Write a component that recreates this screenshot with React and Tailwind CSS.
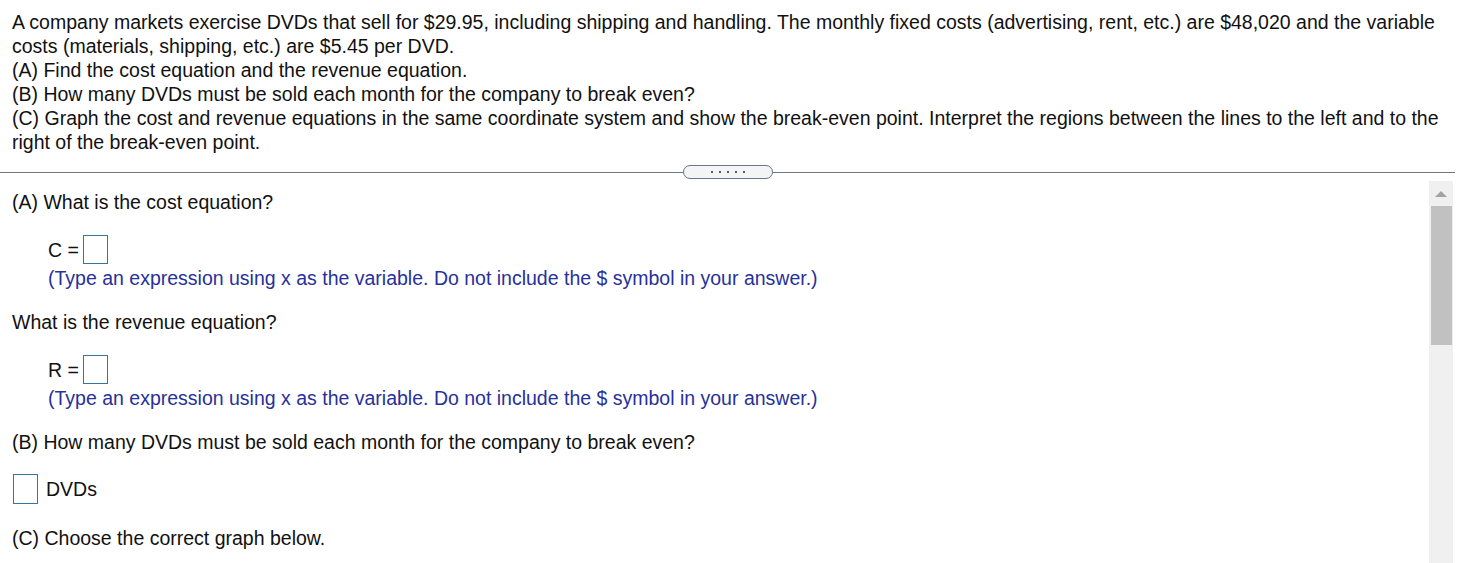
import React from 'react';

function AnswerBox() {
  return <span className="inline-block w-[25px] h-[29px] border border-[#2f78a6] bg-white" />;
}

export default function App() {
  return (
    <div className="w-[1458px] h-[563px] overflow-hidden bg-white text-[19.5px] leading-6 text-[#111] font-['Liberation_Sans',Arial,sans-serif]">
      {/* Question text */}
      <div className="pl-3 pr-4 pt-[10px]">
        <p>
          A company markets exercise DVDs that sell for $29.95, including shipping and handling. The monthly fixed costs (advertising, rent, etc.) are $48,020 and the variable costs (materials, shipping, etc.) are $5.45 per DVD.
        </p>
        <p>(A) Find the cost equation and the revenue equation.</p>
        <p>(B) How many DVDs must be sold each month for the company to break even?</p>
        <p>
          (C) Graph the cost and revenue equations in the same coordinate system and show the break-even point. Interpret the regions between the lines to the left and to the right of the break-even point.
        </p>
      </div>

      {/* Divider */}
      <div className="mt-[11px] flex items-center pr-[3px]">
        <div className="flex-1 h-px bg-[#6b7785]" />
        <div className="w-[90px] h-[14px] rounded-full border border-[#6b7785] bg-[#f3f4f6] flex items-center justify-center gap-[6px]">
          <span className="w-[2px] h-[2px] bg-[#555b63]" />
          <span className="w-[2px] h-[2px] bg-[#555b63]" />
          <span className="w-[2px] h-[2px] bg-[#555b63]" />
          <span className="w-[2px] h-[2px] bg-[#555b63]" />
          <span className="w-[2px] h-[2px] bg-[#555b63]" />
        </div>
        <div className="flex-1 h-px bg-[#6b7785]" />
      </div>

      {/* Answer area */}
      <div className="mt-[2px] flex h-[400px]">
        <div className="flex-1 pl-3 pt-[9px]">
          <p>(A) What is the cost equation?</p>
          <div className="ml-9 mt-[21px] flex items-center gap-[4px]">
            <span>C =</span>
            <AnswerBox />
          </div>
          <p className="ml-9 mt-[2px] text-[#27319a]">
            (Type an expression using x as the variable. Do not include the $ symbol in your answer.)
          </p>
          <p className="mt-5">What is the revenue equation?</p>
          <div className="ml-9 mt-[21px] flex items-center gap-[4px]">
            <span>R =</span>
            <AnswerBox />
          </div>
          <p className="ml-9 mt-[2px] text-[#27319a]">
            (Type an expression using x as the variable. Do not include the $ symbol in your answer.)
          </p>
          <p className="mt-5">(B) How many DVDs must be sold each month for the company to break even?</p>
          <div className="mt-5 flex items-center gap-[8px] ml-[1px]">
            <span className="inline-block w-[25px] h-[30px] border border-[#2f78a6] bg-white" />
            <span>DVDs</span>
          </div>
          <p className="mt-[22px]">(C) Choose the correct graph below.</p>
        </div>

        {/* Scrollbar */}
        <div className="w-[24px] mr-[5px] bg-[#f0f0f0] flex flex-col items-center">
          <svg width="12" height="6" viewBox="0 0 12 6" className="mt-[10px]">
            <polygon points="6,0 12,6 0,6" fill="#a3a3a3" />
          </svg>
          <div className="mt-[9px] w-[21px] h-[139px] bg-[#c1c1c1]" />
        </div>
      </div>
    </div>
  );
}
